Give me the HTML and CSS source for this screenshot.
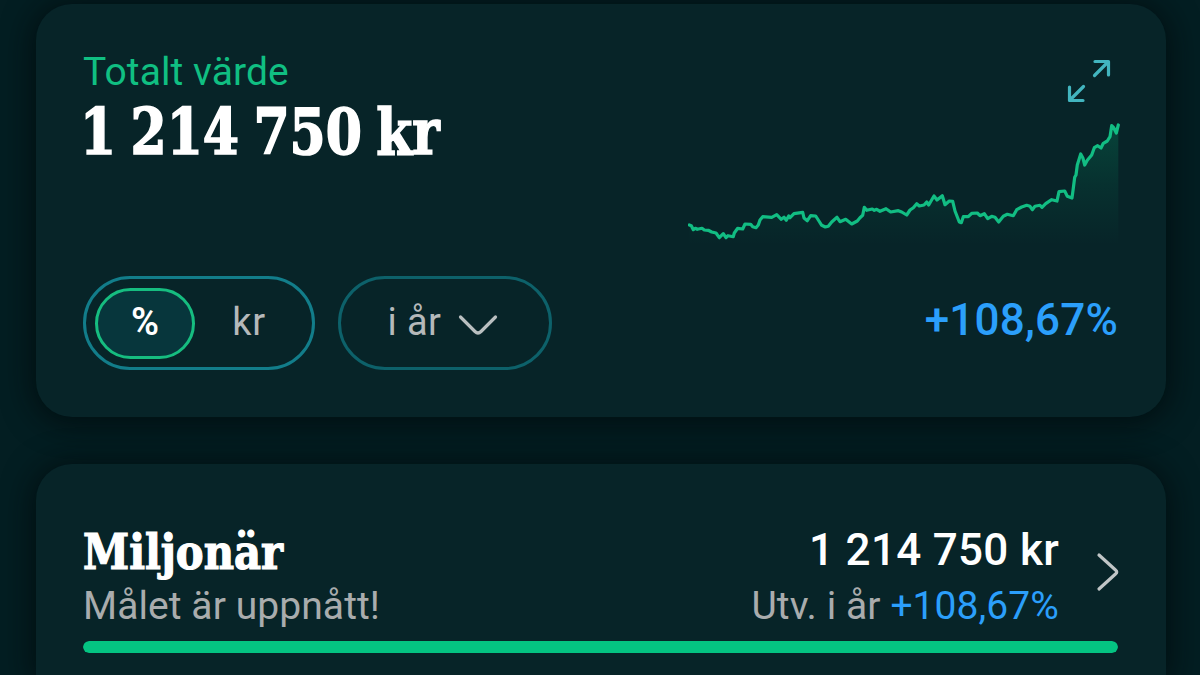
FILE: index.html
```html
<!DOCTYPE html>
<html lang="sv">
  <head>
    <meta charset="UTF-8" />
    <meta name="viewport" content="width=device-width, initial-scale=1" />
    <title>Totalt värde</title>
    <link rel="stylesheet" href="styles.css">
  </head>
  <body>
    <main class="page">
      <!-- ===== TOTAL ===== -->
      <section class="card total">
        <div class="total-top">
          <div class="total-text">
            <p class="total-label">Totalt värde</p>
            <h1 class="total-value"><span>1 214 750 kr</span></h1>
          </div>
          <div class="total-side">
            <svg class="expand" viewBox="0 0 44 44"><path d="M28 2.500h13.500v13.500M41 3L27.500 16.500M2.500 28v13.500h13.500M3 41l13.500-13.500"/></svg>
            <svg class="chart" viewBox="0 0 432 125">
              <defs>
                <linearGradient id="fade" x1="0" y1="5" x2="0" y2="125" gradientUnits="userSpaceOnUse">
                  <stop offset="0" stop-color="#06c281" stop-opacity=".2"/>
                  <stop offset=".5" stop-color="#06c281" stop-opacity=".08"/>
                  <stop offset="1" stop-color="#06c281" stop-opacity="0"/>
                </linearGradient>
              </defs>
              <path class="chart-area" d="M1.300 105L28 113 45 117 57 104 68 108 75 97 89 95 98 100 115 92 119 101 128 96 137 107 149 97 164 104 175 95 176 87 198 89 219 95 229 84 241 85 254 76 265 81 273 103 284 93 296 94 311 102 329 90 344 90 369 81 371 72 384 78 387 57 392.700 34 396.700 45 406 28 413 28 422 17 423.700 5.700 428.300 13 430.300 5V125H1.300z"/>
              <polyline class="chart-line" points="1.3,105 3.3,105.7 5.3,109.7 7.3,108.3 9.3,109.3 14,108.3 16.3,110 20.3,110.3 23.7,112 28,113 31.3,117.7 35.3,113.7 38,117.7 40,115.7 45.3,116.7 46.3,113 49.7,108.3 54.7,109 57,104 62.7,104.3 64.7,106.7 68,107.7 70.3,105 72,100 74.7,96.7 83.7,97.3 88.7,94.7 93.3,99.3 96,97.3 98.3,100.3 100.7,96 102,97.7 106,93.7 114.7,92.3 116,98 119.3,100.7 122.7,95.7 127.7,96 130.3,100 133.7,105.3 137.3,107 140.3,106.3 143.7,102 149,97.3 152,101.7 157.7,99.3 163.7,104 169.3,101 172,97.7 174.7,95.3 176.3,87.3 178.7,90.3 184.3,89 186.3,90.3 188.7,89.3 192,91.3 198,88.7 202.7,92 210.3,90.7 213.7,92 218.7,95 222,90 225.3,87.7 228.7,83.7 231.3,86 236,85 238.7,82 240.7,85 246,76 249,80 254.3,75.7 257,84.7 261.3,81 264.7,81.3 267,91 271.3,102 273.3,102.7 275.3,96.7 280.3,96.7 283.7,93.3 289.3,93 292,95.7 296.3,93.7 299.7,98.7 303.7,96.3 307,97.3 310.7,102 315.3,96.3 319.3,94.3 325.3,95.7 328.7,89.7 333.7,87 338.7,85.3 342,86.3 344.3,89.7 347,86.3 352,85.3 354,87.3 357.7,83.7 363.7,79.7 369,81 371,71.7 376.7,71 379.3,76.3 384,78 385.3,68.3 386.7,57.3 388,55 389.3,45 392.7,34 395,38.3 396.7,45 399.3,40.3 403.7,35 406.3,27.7 409.7,25.7 413,28 415.3,23.3 419.3,21 422,16.7 423.7,5.7 425.7,7.7 428.3,13 430.3,5"/>
            </svg>
          </div>
        </div>

        <div class="controls">
          <div class="toggle">
            <button class="toggle-item active">%</button>
            <button class="toggle-item">kr</button>
          </div>
          <button class="period">
            <span>i år</span>
            <svg class="chevron-down" viewBox="0 0 40 24"><path d="M2.500 3l14.500 14.500q3 3 6 0L37.500 3"/></svg>
          </button>
          <span class="change">+108,67%</span>
        </div>
      </section>

      <!-- ===== GOAL ===== -->
      <section class="card goal">
        <div class="goal-row">
          <div class="goal-info">
            <h2 class="goal-name"><span>Miljonär</span></h2>
            <p class="goal-sub">Målet är uppnått!</p>
          </div>
          <div class="goal-numbers">
            <p class="goal-value">1 214 750 kr</p>
            <p class="goal-sub">Utv. i år <span class="up">+108,67%</span></p>
          </div>
          <svg class="chevron-right" viewBox="0 0 24 40"><path d="M3 3l16.500 15q2.500 2 0 4L3 37"/></svg>
        </div>
        <div class="progress"><div class="progress-fill" style="width:100%"></div></div>
      </section>
    </main>
  </body>
</html>
```
FILE: styles.css
```css
:root {        /* palette */
  --c-bg: #031e22;
  --c-card: #072428;
  --c-green: #10bf82;
  --c-blue: #2b9ffb;
  --c-muted: #a9acad;
}
*,*::before,*::after{box-sizing:border-box;margin:0;padding:0}
html,body{height:100%;background:var(--c-bg);color:#fff;font-family:Roboto,sans-serif;overflow:hidden}
button{font:inherit;color:inherit;background:none;border:none}
svg{display:block;fill:none;stroke-linecap:round;stroke-linejoin:round}

/* ===== LAYOUT ===== */
.page{display:flex;flex-direction:column;gap:47px;height:100%;padding:4px 34px 0 36px}
.card{background:var(--c-card);border-radius:36px;padding:45px 48px 0 47px;box-shadow:0 3px 30px 4px rgba(0,8,10,.7)}

/* ===== TOTAL ===== */
.total{flex:none;height:413px}
.total-top{display:flex;justify-content:space-between;height:227px}
.total-label{font-size:39px;line-height:46px;letter-spacing:.08px;color:var(--c-green)}
.total-value{margin-top:-1px;font-family:"Roboto Slab","DejaVu Serif",serif;font-stretch:condensed;font-size:64px;line-height:76px;font-weight:700;word-spacing:-4px;white-space:nowrap;-webkit-text-stroke:1.6px #fff}
.total-value span,.goal-name span{display:inline-block;transform-origin:left}
.total-value span{transform:translateX(-3px) scaleX(.902)}
.total-side{display:flex;flex-direction:column;align-items:flex-end;padding-top:10px}
.expand{width:44px;height:44px;margin-right:7px;stroke:#42b5bf;stroke-width:3.2}
.chart{width:432px;height:125px;margin:17px -2px 0 0}
.chart-line{stroke:#12bd83;stroke-width:3.2}
.chart-area{fill:url(#fade)}

/* controls */
.controls{display:flex;align-items:center;height:94px;font-size:38px;color:#b5b9ba}
.toggle{display:flex;width:232px;height:94px;padding:9px;border:3px solid #127d8a;border-radius:47px}
.toggle-item{flex:1;height:71px;letter-spacing:.8px;padding-bottom:4px}
.toggle-item.active{flex:none;width:100px;background:#07363c;border:3px solid #16bd80;border-radius:36px;color:#fff;font-weight:600;letter-spacing:0}
.period{display:flex;align-items:center;justify-content:center;gap:17px;width:214px;height:94px;margin-left:23px;padding-right:4px;border:3px solid #0d616a;border-radius:47px;letter-spacing:.4px}
.period span{padding-bottom:2px}
.chevron-down{width:40px;height:24px;margin-top:5px;stroke:#b9bfc0;stroke-width:3.2}
.change{margin-left:auto;padding-bottom:7px;font-size:44px;font-weight:500;letter-spacing:.2px;color:var(--c-blue)}

/* ===== GOAL ===== */
.goal{flex:1;padding-top:60px;border-radius:36px 36px 0 0}
.goal-row{display:flex;height:117px}
.goal-name{font-family:"Roboto Slab","DejaVu Serif",serif;font-stretch:condensed;font-size:48px;line-height:57px;font-weight:700;-webkit-text-stroke:1.2px #fff}
.goal-name span{transform:scaleX(.965)}
.goal-numbers{margin-left:auto;text-align:right}
.goal-value{margin-top:-4px;font-size:44px;line-height:61px;font-weight:500;letter-spacing:.3px}
.goal-sub{margin-top:2px;font-size:39px;line-height:46px;letter-spacing:.08px;color:var(--c-muted)}
.up{color:var(--c-blue)}
.chevron-right{width:24px;height:40px;margin:28px -2px 0 37px;stroke:#c1c6c7;stroke-width:3.2}
.progress{height:12px;border-radius:6px;background:#0c3a3a;overflow:hidden}
.progress-fill{height:100%;border-radius:6px;background:#04c482}
```
